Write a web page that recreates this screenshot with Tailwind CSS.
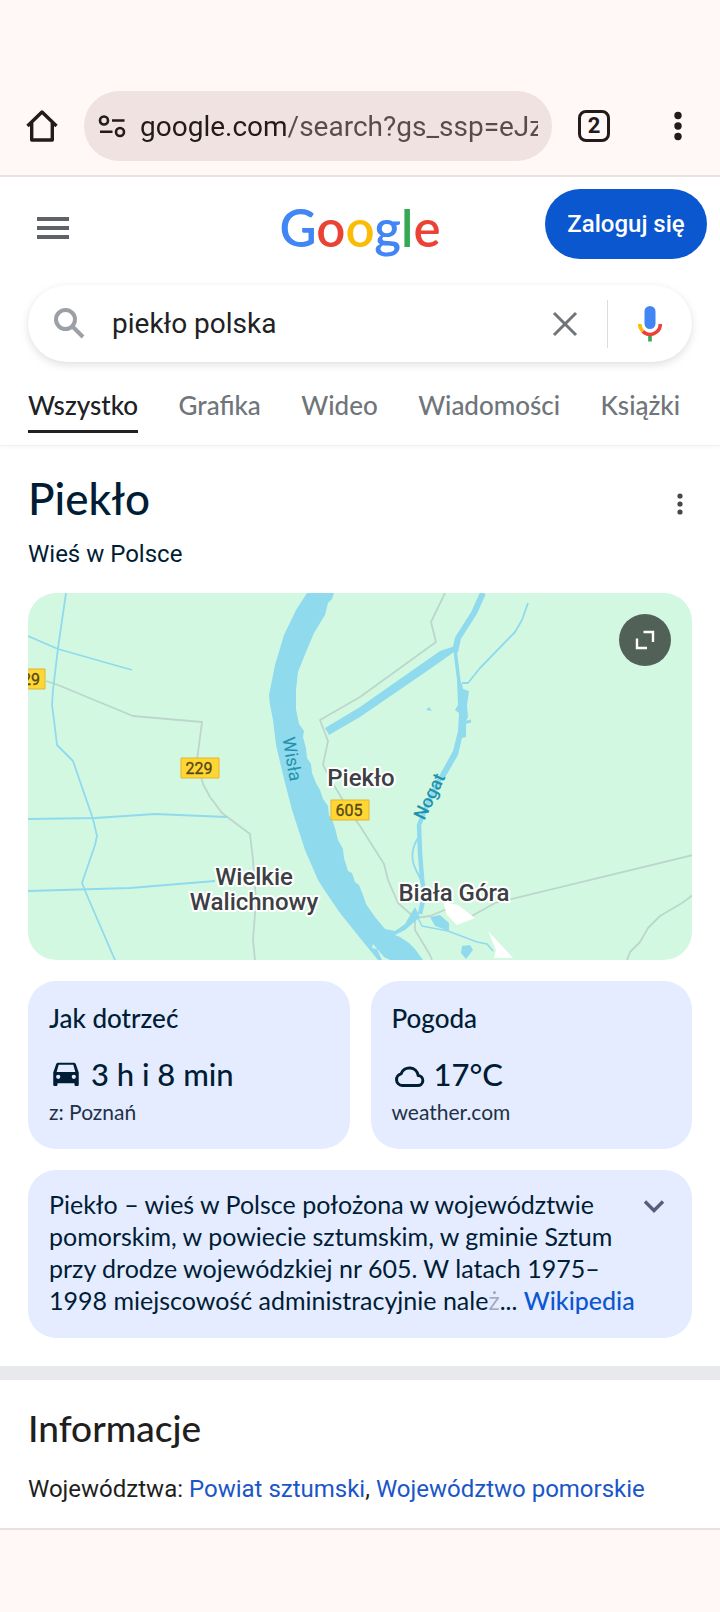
<!DOCTYPE html>
<html lang="pl">
<head>
    <meta charset="UTF-8">
    <meta name="viewport" content="width=device-width, initial-scale=1.0">
    <title>piekło polska - Szukaj w Google</title>
    <script src="https://cdn.jsdelivr.net/npm/@tailwindcss/browser@4"></script>
</head>
<body class="min-h-screen flex flex-col bg-[#fff8f6] font-['Roboto',sans-serif] text-[#1f1f1f]">

    <!-- Browser toolbar -->
    <div class="flex items-center h-[177px] pt-[77px] border-b-2 border-[#eddfdc] shrink-0">
        <button class="w-[84px] flex justify-center" aria-label="Strona główna">
            <svg class="w-9 h-9" viewBox="0 0 36 36" fill="none" stroke="#231a19" stroke-width="3.4" stroke-linejoin="round">
                <path d="M3.5 18 18 4l14.500 14M7.700 15v17h20.600V15"/>
            </svg>
        </button>
        <div class="flex-1 min-w-0 flex items-center h-[70px] rounded-full bg-[#f0e2e0] pl-[14px] pr-[14px]">
            <svg class="w-7 h-7 shrink-0" viewBox="0 0 28 28" fill="none" stroke="#231a19" stroke-width="2.600">
                <circle cx="6" cy="8.500" r="4"/>
                <circle cx="22" cy="20" r="4"/>
                <path d="M14 8.500h12.500M2 19.800h12.500"/>
            </svg>
            <input type="text" aria-label="Adres" value="google.com/search?gs_ssp=eJzj4tDP"
                   class="flex-1 min-w-0 ml-[14px] h-12 text-[28px] bg-[linear-gradient(to_right,#231a19_148px,#5a4a48_148px)] bg-clip-text text-transparent outline-none">
        </div>
        <button class="w-[84px] flex justify-center" aria-label="Karty">
            <span class="w-8 h-8 border-[3px] border-[#231a19] rounded-lg flex items-center justify-center text-[22px] leading-none font-bold text-[#231a19]">2</span>
        </button>
        <button class="w-[84px] flex justify-center" aria-label="Więcej">
            <svg class="w-2 h-8" viewBox="0 0 8 32" fill="#231a19">
                <circle cx="4" cy="5.500" r="3.700"/>
                <circle cx="4" cy="16" r="3.700"/>
                <circle cx="4" cy="26.500" r="3.700"/>
            </svg>
        </button>
    </div>

    <main class="bg-white border-b-2 border-[#eddfdc]">
        <header class="border-b border-[#f1f1f1] shadow-[0_2px_4px_rgba(0,0,0,0.03)]">
            <div class="grid grid-cols-3 items-center h-[94px]">
                <button class="ml-[37px] mt-2 w-8 h-[22px] flex flex-col justify-between" aria-label="Menu">
                    <span class="w-full h-1 bg-[#5f6368]"></span>
                    <span class="w-full h-1 bg-[#5f6368]"></span>
                    <span class="w-full h-1 bg-[#5f6368]"></span>
                </button>
                <a href="#" class="mt-2 text-center font-['Lato',sans-serif] font-semibold text-[51px] leading-[56px]"><span class="text-[#4285f4]">G</span><span class="text-[#ea4335]">o</span><span class="text-[#fbbc05]">o</span><span class="text-[#4285f4]">g</span><span class="text-[#34a853]">l</span><span class="text-[#ea4335]">e</span></a>
                <button class="justify-self-end mr-[13px] h-[70px] w-[162px] rounded-full bg-[#0b57d0] text-white text-[24px] font-medium">Zaloguj się</button>
            </div>

            <form class="mx-[28px] mt-[14px] h-[77px] flex items-center rounded-full bg-white shadow-[0_3px_8px_rgba(0,0,0,0.12),0_0_2px_rgba(0,0,0,0.04)]">
                <svg class="ml-6 w-9 h-9 shrink-0" viewBox="0 0 36 36" fill="none" stroke="#9aa0a6" stroke-width="4">
                    <circle cx="13.500" cy="13.500" r="9.500"/>
                    <path d="M20.500 20.500 31 31"/>
                </svg>
                <input type="text" aria-label="Szukaj" value="piekło polska" class="flex-1 min-w-0 ml-6 h-12 text-[28px] text-[#202124] outline-none">
                <button type="button" aria-label="Wyczyść" class="w-[84px] flex justify-center">
                    <svg class="w-7 h-7" viewBox="0 0 28 28" fill="none" stroke="#70757a" stroke-width="3">
                        <path d="M3 3l22 22M25 3 3 25"/>
                    </svg>
                </button>
                <button type="button" aria-label="Wyszukiwanie głosowe" class="w-[85px] h-12 border-l border-[#dadce0] flex items-center justify-center">
                    <svg class="w-6 h-9" viewBox="0 0 24 36" fill="none" stroke-width="3.600">
                        <rect x="6.500" y="0" width="11" height="23" rx="5.500" fill="#4285f4"/>
                        <path d="M12 29v6.500" stroke="#34a853"/>
                        <path d="M22.300 18a10.300 10.300 0 0 1-17.600 7.300" stroke="#ea4335"/>
                        <path d="M1.700 18c0 2.900 1.100 5.400 3 7.300" stroke="#fbbc05"/>
                    </svg>
                </button>
            </form>

            <nav class="mx-[28px] mt-[22px] h-[61px] flex items-start justify-between pr-3 font-['Lato',sans-serif] text-[26px] leading-[42px] text-[#70757a] font-medium whitespace-nowrap">
                <a href="#" class="pb-1 text-[#202124] border-b-[3px] border-[#202124]">Wszystko</a>
                <a href="#">Grafika</a>
                <a href="#">Wideo</a>
                <a href="#">Wiadomości</a>
                <a href="#">Książki</a>
            </nav>
        </header>

        <section class="px-[28px] pt-[26px] pb-7 text-[#001d35]">
            <div class="flex items-center justify-between">
                <h1 class="font-['Lato',sans-serif] font-medium text-[44px] leading-[52px]">Piekło</h1>
                <button aria-label="Więcej opcji" class="mt-3 w-6 h-8 flex items-center justify-center">
                    <svg class="w-2 h-6" viewBox="0 0 8 24" fill="#474747">
                        <circle cx="4" cy="4" r="2.600"/>
                        <circle cx="4" cy="12" r="2.600"/>
                        <circle cx="4" cy="20" r="2.600"/>
                    </svg>
                </button>
            </div>
            <p class="mt-[13px] text-[24px] leading-[34px]">Wieś w Polsce</p>

            <!-- Map -->
            <div class="relative mt-[22px] rounded-[28px] overflow-hidden bg-[#d3f8e2]">
                <svg class="block w-full" viewBox="28 593 664 367" fill="none" stroke-linejoin="round" role="img" aria-label="Mapa: Piekło">
                    <!-- roads -->
                    <g stroke="#bcd6cb" stroke-width="1.800">
                        <path d="M46 681l12 4 75 31 69 6-5 38 6 24 7 13 12 16 28 21 3 26 3 40-3 40 2 20"/>
                        <path d="M445 593l-14 29 5 20-76 55-40 23 8 21-5 24 12 22 15 25 10 14 24 38 4 16 10 23 17 15 15-2 17-7 3 8 8 3 12-3 25-14 198-48"/>
                        <path d="M415 918v12l15 25 2 5"/>
                        <path d="M693 895l-11 8-22 13-12 12-8 14-10 10-3 8"/>
                    </g>
                    <path d="M443 902l15 3 17 13-18 7-10-10zM488 931l25 27h-19l2-8z" fill="#fff"/>
                    <!-- small canals -->
                    <g stroke="#90daee" stroke-width="1.800">
                        <path d="M66 593l-8 55-5 42-1 15 2 15 3 25 16 16 20 58 4 17-2 9-13 38 4 10 29 67"/>
                        <path d="M28 636l30 13 74 21M28 819l67-1 60-4 72 3M28 891l102-3 85-7"/>
                        <path d="M528 603l-6 17-7 12-35 36-12 15h-6"/>
                        <path d="M418 918l4 8 26 5 29 11 10 2 6 7" stroke-width="1.500"/>
                        <path d="M418 838q-10 16-2 32l6 12"/>
                    </g>
                    <!-- rivers -->
                    <path fill="#90daee" d="M307 593L296 610 284 635 275 665 269 695 270 705 273 720 276 745 283 775 292 810 305 850 318 880 325 891 340 913 360 938 378 960H382L377 949 372 948 373 944 384 957 390 960H423L415 949 409 943 400 937 395 935 405 930 420 917 415 907 405 924 395 931 385 929 375 917 366 904 363 895 359 885 355 882 352 873 348 871 344 858 343 849 338 840 335 828 333 822 329 815 328 806 323 799 320 790 316 783 312 773 311 764 307 758 306 748 303 737 304 731 299 724 296 709 296 690 298 672 306 652 314 633 325 615 328 603 332 599 334 593z"/>
                    <path fill="#90daee" d="M325 728l35-21 80-56 15-5-1 6-24 17-70 48-31 18z"/>
                    <path d="M483 593l-9 20-16 25-3 14" stroke="#90daee" stroke-width="6"/>
                    <path d="M455 650l4 32 4 18" stroke="#90daee" stroke-width="3.500"/>
                    <path fill="#90daee" d="M457 680l5 4 1 5 6 2-2 14 1 12-2 4v16l-4 1-4 17-15 26-5-3 15-27 5-20 1-18-4-3 3-5z"/>
                    <path d="M463 723l8-2" stroke="#90daee" stroke-width="3"/>
                    <path d="M440 778l-12 25-9 22 1 28 2 25 2 18-4 18" stroke="#90daee" stroke-width="4.500"/>
                    <path fill="#90daee" d="M430 917l10-2 9 8v8l-14-5zM462 946l8-1 3 5-7 9-5-6zM426 710l3-3 3 4z"/>

                    <!-- road numbers -->
                    <g fill="#ffd633" stroke="#e3b52c" stroke-width="1">
                        <rect x="7" y="669" width="38" height="20"/>
                        <rect x="181" y="758" width="38" height="20"/>
                        <rect x="331" y="800" width="38" height="20"/>
                    </g>
                    <g class="text-[16px]" fill="#54491a" stroke="#54491a" stroke-width="0.300" text-anchor="middle">
                        <text x="31" y="685">29</text>
                        <text x="199" y="774">229</text>
                        <text x="349" y="816">605</text>
                    </g>

                    <!-- place names -->
                    <g class="text-[24px] font-medium" fill="#3c4043" stroke="#fff" stroke-width="4" paint-order="stroke" text-anchor="middle">
                        <text x="361" y="786">Piekło</text>
                        <text x="254" y="885">Wielkie</text>
                        <text x="254" y="910">Walichnowy</text>
                        <text x="454" y="901">Biała Góra</text>
                    </g>
                    <g class="text-[18px]" fill="#1f93ac" text-anchor="middle">
                        <text transform="translate(286 760) rotate(80)">Wisła</text>
                        <text class="font-medium" transform="translate(435 799) rotate(-64)">Nogat</text>
                    </g>
                </svg>
                <button aria-label="Rozwiń mapę" class="absolute top-[21px] right-[21px] w-[52px] h-[52px] rounded-full bg-[#526158] flex items-center justify-center">
                    <svg class="w-5 h-5" viewBox="0 0 20 20" fill="none" stroke="#fff" stroke-width="2.400">
                        <path d="M8.500 2H18v10M2 8.500V18h10"/>
                    </svg>
                </button>
            </div>

            <div class="mt-[21px] grid grid-cols-2 gap-[21px] font-['Lato',sans-serif]">
                <a href="#" class="block h-[168px] rounded-[28px] bg-[#e5ecff] px-[21px] pt-5">
                    <h2 class="text-[26px] leading-[34px] font-medium">Jak dotrzeć</h2>
                    <div class="mt-[18px] flex items-center gap-2 text-[31px] leading-[42px] font-medium">
                        <svg class="w-[34px] h-[34px]" viewBox="0 0 24 24" fill="#001d35">
                            <path d="M18.920 5.010C18.720 4.420 18.160 4 17.500 4h-11c-.66 0-1.210.42-1.420 1.010L3 11v8.500c0 .55.45 1 1 1h1c.55 0 1-.45 1-1V18.500h12v1c0 .55.45 1 1 1h1c.55 0 1-.45 1-1V11l-2.080-5.990zM6.850 5.500h10.290l1.460 5H5.400l1.450-5zM6.500 15.500a1.500 1.500 0 1 1 0-3 1.500 1.500 0 0 1 0 3zm11 0a1.500 1.500 0 1 1 0-3 1.500 1.500 0 0 1 0 3z" fill-rule="evenodd"/>
                        </svg>
                        <span>3 h i 8 min</span>
                    </div>
                    <p class="text-[21px] leading-[34px] text-[#1f3147]">z: Poznań</p>
                </a>
                <a href="#" class="block h-[168px] rounded-[28px] bg-[#e5ecff] px-[21px] pt-5">
                    <h2 class="text-[26px] leading-[34px] font-medium">Pogoda</h2>
                    <div class="mt-[18px] flex items-center gap-2 text-[31px] leading-[42px] font-medium">
                        <svg class="w-[34px] h-[34px]" viewBox="0 0 34 34" fill="none" stroke="#001d35" stroke-width="3" stroke-linejoin="round">
                            <path d="M10 28.500h15.500a5 5 0 0 0 .7-10 8.900 8.900 0 0 0-17.200-1.600A5.900 5.900 0 0 0 10 28.500z"/>
                        </svg>
                        <span>17°C</span>
                    </div>
                    <p class="text-[21px] leading-[34px] text-[#1f3147]">weather.com</p>
                </a>
            </div>

            <div class="mt-[21px] h-[168px] rounded-[28px] bg-[#e5ecff] px-[21px] pt-[18px] flex justify-between">
                <p class="font-['Lato',sans-serif] text-[25px] leading-8 whitespace-nowrap">
                    Piekło – wieś w Polsce położona w województwie<br>
                    pomorskim, w powiecie sztumskim, w gminie Sztum<br>
                    przy drodze wojewódzkiej nr 605. W latach 1975–<br>
                    1998 miejscowość administracyjnie nale<span class="opacity-30">ż</span>... <a href="#" class="font-medium text-[#0b57d0]">Wikipedia</a>
                </p>
                <button aria-label="Rozwiń opis" class="w-8 h-9 flex items-center justify-center">
                    <svg class="w-6 h-4" viewBox="0 0 24 16" fill="none" stroke="#575e7c" stroke-width="3.400">
                        <path d="M2 3.500l9 9 9-9"/>
                    </svg>
                </button>
            </div>
        </section>

        <div class="h-[14px] bg-[#e8e9ec]"></div>

        <section class="px-[28px] pt-[23px] pb-[17px]">
            <h2 class="font-['Lato',sans-serif] font-medium text-[37px] leading-[50px]">Informacje</h2>
            <p class="mt-[14px] text-[24px] leading-[44px] whitespace-nowrap">Województwa: <a href="#" class="text-[#1a56c8]">Powiat sztumski</a>, <a href="#" class="text-[#1a56c8]">Województwo pomorskie</a></p>
        </section>
    </main>
</body>
</html>
